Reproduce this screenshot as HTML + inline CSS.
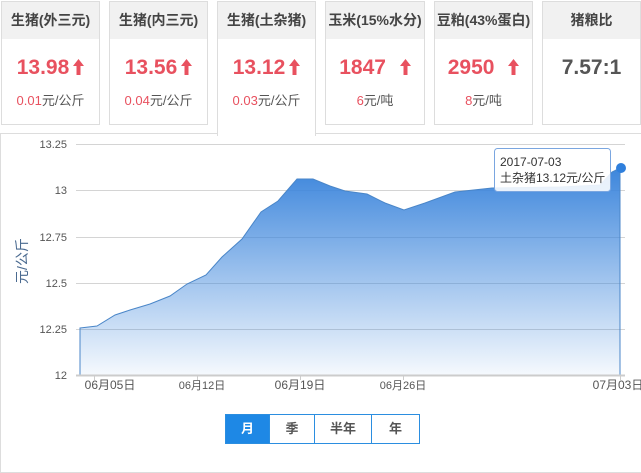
<!DOCTYPE html>
<html><head><meta charset="utf-8"><style>
*{margin:0;padding:0;box-sizing:border-box}
body{width:641px;height:452px;background:#fff;position:relative;overflow:hidden;font-family:"Liberation Sans","Noto Sans CJK SC",sans-serif}
.card{position:absolute;top:1px;width:99px;height:124px;border:1px solid #ddd;background:#fff;text-align:center}
.card .h{height:37px;background:#f1f1f1;line-height:37px;font-size:14px;color:#444;font-weight:bold}
.card .v{margin-top:16px;font-size:21px;font-weight:bold;color:#e8515f;height:26px;line-height:26px}
.card .v svg{vertical-align:-1px;margin-left:4px}
.card .s{margin-top:9px;font-size:13px;color:#555}
.card .s b{font-weight:normal;color:#e8515f}
.act{height:135px;border-bottom:none;z-index:2}
.panel{position:absolute;left:0;top:133px;width:660px;height:340px;border:1px solid #ddd;background:#fff}
.btns{position:absolute;left:225px;top:414px;height:30px;display:flex;border:1px solid #2b8ee0;font-size:13px;font-weight:bold;color:#555}
.btns div{line-height:28px;text-align:center;border-left:1px solid #2b8ee0}
.btns div:first-child{border-left:none;background:#1e88e5;color:#fff}
</style></head><body>
<div class="panel"></div>
<div class="card" style="left:1px"><div class="h">生猪(外三元)</div><div class="v">13.98<svg width="11" height="16" viewBox="0 0 11 16"><path d="M5.5 0L11 7H7.5V16H3.5V7H0Z" fill="#e8515f"/></svg></div><div class="s"><b>0.01</b>元/公斤</div></div>
<div class="card" style="left:109px"><div class="h">生猪(内三元)</div><div class="v">13.56<svg width="11" height="16" viewBox="0 0 11 16"><path d="M5.5 0L11 7H7.5V16H3.5V7H0Z" fill="#e8515f"/></svg></div><div class="s"><b>0.04</b>元/公斤</div></div>
<div class="card act" style="left:217px"><div class="h">生猪(土杂猪)</div><div class="v">13.12<svg width="11" height="16" viewBox="0 0 11 16"><path d="M5.5 0L11 7H7.5V16H3.5V7H0Z" fill="#e8515f"/></svg></div><div class="s"><b>0.03</b>元/公斤</div></div>
<div class="card" style="left:325px;width:100px"><div class="h">玉米(15%水分)</div><div class="v">1847 <svg width="11" height="16" viewBox="0 0 11 16" style="margin-left:8px"><path d="M5.5 0L11 7H7.5V16H3.5V7H0Z" fill="#e8515f"/></svg></div><div class="s"><b>6</b>元/吨</div></div>
<div class="card" style="left:434px"><div class="h">豆粕(43%蛋白)</div><div class="v">2950 <svg width="11" height="16" viewBox="0 0 11 16" style="margin-left:8px"><path d="M5.5 0L11 7H7.5V16H3.5V7H0Z" fill="#e8515f"/></svg></div><div class="s"><b>8</b>元/吨</div></div>
<div class="card" style="left:542px"><div class="h">猪粮比</div><div class="v" style="color:#555">7.57:1</div></div>
<svg style="position:absolute;left:0;top:0" width="641" height="452">
<defs><linearGradient id="g" x1="0" y1="0" x2="0" y2="1"><stop offset="0" stop-color="#3d86dc"/><stop offset="1" stop-color="#3d86dc" stop-opacity="0.05"/></linearGradient></defs>
<g stroke="#d4d4d4" stroke-width="1">
<line x1="76" y1="144.5" x2="625" y2="144.5"/><line x1="76" y1="190.5" x2="625" y2="190.5"/><line x1="76" y1="237.5" x2="625" y2="237.5"/><line x1="76" y1="283.5" x2="625" y2="283.5"/><line x1="76" y1="329.5" x2="625" y2="329.5"/></g>
<path d="M80,328 L97,326 L115,315 L130,310 L150,304 L170,296 L187,284 L206,275 L222,257 L242,239 L261,212 L278,201 L297,179 L313,179 L330,186 L345,191 L367,194 L385,203 L404,210 L425,203 L455,192 L492,188 L560,187 L600,185 L612,172 L620,168 L620,375 L80,375 Z" fill="url(#g)" stroke="#4a86c8" stroke-width="1"/>
<line x1="76" y1="375.5" x2="625" y2="375.5" stroke="#ccc" stroke-width="2"/>
<g stroke="#ccc"><line x1="94.5" y1="375" x2="94.5" y2="380"/><line x1="197.5" y1="375" x2="197.5" y2="380"/><line x1="300.5" y1="375" x2="300.5" y2="380"/><line x1="403.5" y1="375" x2="403.5" y2="380"/><line x1="620.5" y1="375" x2="620.5" y2="380"/></g>
<circle cx="621" cy="168" r="5" fill="#2f7fdc"/>
<g font-size="11" fill="#555" text-anchor="end" font-family="Liberation Sans,sans-serif">
<text x="67" y="148">13.25</text><text x="67" y="194">13</text><text x="67" y="241">12.75</text><text x="67" y="287">12.5</text><text x="67" y="333">12.25</text><text x="67" y="379">12</text></g>
<text transform="translate(27,261) rotate(-90)" font-size="14" fill="#4a6a90" text-anchor="middle" font-family="Liberation Sans,Noto Sans CJK SC,sans-serif">元/公斤</text>
<g font-size="12" fill="#555" text-anchor="middle" font-family="Liberation Sans,Noto Sans CJK SC,sans-serif">
<text x="110" y="389">06月05日</text><text x="202" y="389" font-size="11">06月12日</text><text x="300" y="389">06月19日</text><text x="403" y="389" font-size="11">06月26日</text><text x="618" y="389">07月03日</text></g>
<rect x="494.5" y="148.5" width="116" height="43" rx="3" fill="#fff" fill-opacity="0.88" stroke="#7aa6e0"/>
<text x="500" y="166" font-size="12" fill="#333" font-family="Liberation Sans,Noto Sans CJK SC,sans-serif">2017-07-03</text>
<text x="500" y="182" font-size="12" fill="#333" font-family="Liberation Sans,Noto Sans CJK SC,sans-serif">土杂猪13.12元/公斤</text>
</svg>
<div class="btns"><div style="width:43px">月</div><div style="width:45px">季</div><div style="width:57px">半年</div><div style="width:48px">年</div></div>
</body></html>
